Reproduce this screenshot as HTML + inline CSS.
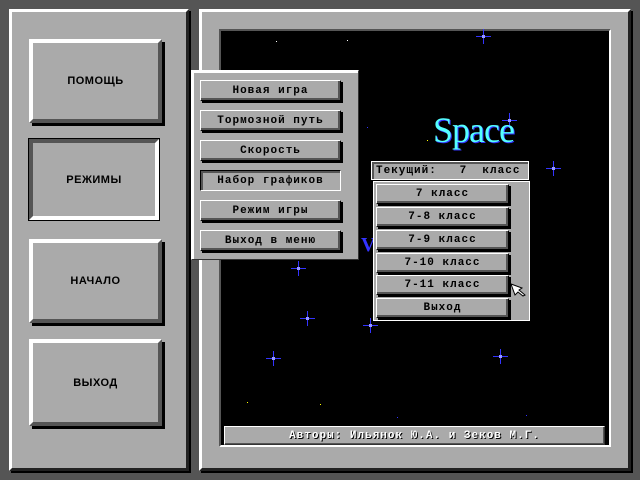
<!DOCTYPE html><html><head><meta charset="utf-8"><style>
*{margin:0;padding:0;box-sizing:border-box}
body{width:640px;height:480px;background:#555;position:relative;overflow:hidden;font-family:"Liberation Mono","DejaVu Sans Mono",monospace;font-weight:bold;font-size:11px;color:#000}
.a{position:absolute}
.panel{position:absolute;background:#aaa;border-style:solid;border-width:3px;border-color:#fff #222 #222 #fff;box-shadow:2px 2px 0 #000}
.big{position:absolute;background:#aaa;border-style:solid;border-width:4px;border-color:#fff #555 #555 #fff;box-shadow:3px 3px 0 #000;display:flex;align-items:center;justify-content:center;font-family:"Liberation Sans",sans-serif;font-weight:900;font-size:11px;letter-spacing:0.5px}
.big.p{border-color:#555 #fff #fff #555;box-shadow:none;outline:1px solid #000}
.btn{position:absolute;background:#aaa;border:1px solid #000;border-top-color:#fff;border-left-color:#fff;box-shadow:inset -2px -2px 0 #555,2px 2px 0 #000;display:flex;align-items:center;justify-content:center;letter-spacing:1px}
.btn.p{box-shadow:inset 2px 2px 0 #555;border-color:#000 #fff #fff #000}
.star{position:absolute;width:1px;height:1px;background:#fff}
.x{position:absolute;width:15px;height:15px}
.x:before{content:"";position:absolute;left:7px;top:0;width:1px;height:15px;background:#33f}
.x:after{content:"";position:absolute;top:7px;left:0;height:1px;width:15px;background:#33f}
.x i{position:absolute;left:6px;top:6px;width:3px;height:3px;background:#99f;z-index:1}
</style></head><body>
<div class="panel" style="left:9px;top:9px;width:180px;height:462px"></div>
<div class="panel" style="left:199px;top:9px;width:432px;height:462px"></div>
<div class="a" style="left:219px;top:29px;width:392px;height:418px;background:#000;border:2px solid;border-color:#555 #fff #fff #555"></div>
<div class="x" style="left:476px;top:29px"><i></i></div>
<div class="x" style="left:502px;top:113px"><i></i></div>
<div class="x" style="left:546px;top:161px"><i></i></div>
<div class="x" style="left:291px;top:261px"><i></i></div>
<div class="x" style="left:300px;top:311px"><i></i></div>
<div class="x" style="left:363px;top:318px"><i></i></div>
<div class="x" style="left:266px;top:351px"><i></i></div>
<div class="x" style="left:493px;top:349px"><i></i></div>
<div class="star" style="left:276px;top:41px"></div><div class="star" style="left:347px;top:40px"></div>
<div class="star" style="left:427px;top:140px;background:#ff0"></div><div class="star" style="left:247px;top:402px;background:#ff0"></div>
<div class="star" style="left:320px;top:404px;background:#ff0"></div><div class="star" style="left:397px;top:417px;background:#33f"></div>
<div class="star" style="left:526px;top:415px;background:#33f"></div><div class="star" style="left:367px;top:127px;background:#33f"></div>
<div class="a" style="left:433px;top:109px;font-family:'Liberation Serif',serif;font-weight:normal;font-size:36px;color:#5ff;text-shadow:1px 1px 0 #33f;letter-spacing:-1px">Space</div>
<div class="a" style="left:361px;top:234px;font-family:'Liberation Serif',serif;font-size:20px;color:#33f">V</div>
<div class="a" style="left:224px;top:426px;width:381px;height:19px;background:#aaa;border:1px solid;border-color:#fff #333 #333 #fff;box-shadow:inset -1px -1px 0 #555;color:#fff;font-size:11px;display:flex;align-items:center;justify-content:center;text-shadow:1px 1px 0 #000;letter-spacing:1px">Авторы: Ильянок Ю.А. и Зеков М.Г.</div>

<div class="big" style="left:29px;top:39px;width:133px;height:84px">ПОМОЩЬ</div>
<div class="big p" style="left:29px;top:139px;width:130px;height:81px">РЕЖИМЫ</div>
<div class="big" style="left:29px;top:239px;width:133px;height:84px">НАЧАЛО</div>
<div class="big" style="left:29px;top:339px;width:133px;height:87px">ВЫХОД</div>

<div class="a" style="left:191px;top:70px;width:168px;height:190px;background:#aaa;border:1px solid;border-color:#fff #333 #333 #fff;box-shadow:inset 2px 2px 0 #fff"></div>
<div class="btn" style="left:200px;top:80px;width:141px;height:21px">Новая игра</div>
<div class="btn" style="left:200px;top:110px;width:141px;height:21px">Тормозной путь</div>
<div class="btn" style="left:200px;top:140px;width:141px;height:21px">Скорость</div>
<div class="btn p" style="left:200px;top:170px;width:141px;height:21px">Набор графиков</div>
<div class="btn" style="left:200px;top:200px;width:141px;height:21px">Режим игры</div>
<div class="btn" style="left:200px;top:230px;width:141px;height:21px">Выход в меню</div>

<div class="a" style="left:371px;top:161px;width:158px;height:19px;background:#aaa;border:1px solid #fff;box-shadow:inset 2px 2px 0 #555;display:flex;align-items:center;padding-left:4px;letter-spacing:1px;white-space:pre">Текущий:   7  класс</div>
<div class="a" style="left:373px;top:181px;width:157px;height:140px;background:#aaa;border:1px solid #fff"></div>
<div class="btn" style="left:376px;top:184px;width:133px;height:20px">7 класс</div>
<div class="btn" style="left:376px;top:207px;width:133px;height:20px">7-8 класс</div>
<div class="btn" style="left:376px;top:230px;width:133px;height:20px">7-9 класс</div>
<div class="btn" style="left:376px;top:253px;width:133px;height:20px">7-10 класс</div>
<div class="btn" style="left:376px;top:275px;width:133px;height:20px">7-11 класс</div>
<div class="btn" style="left:376px;top:298px;width:133px;height:20px">Выход</div>
<svg class="a" style="left:510px;top:283px" width="18" height="14"><path d="M1 1 L12 5 L9 7 L15 12 L13 13 L8 9 L5 12 Z" fill="#fff" stroke="#000" stroke-width="1"/></svg>
</body></html>
